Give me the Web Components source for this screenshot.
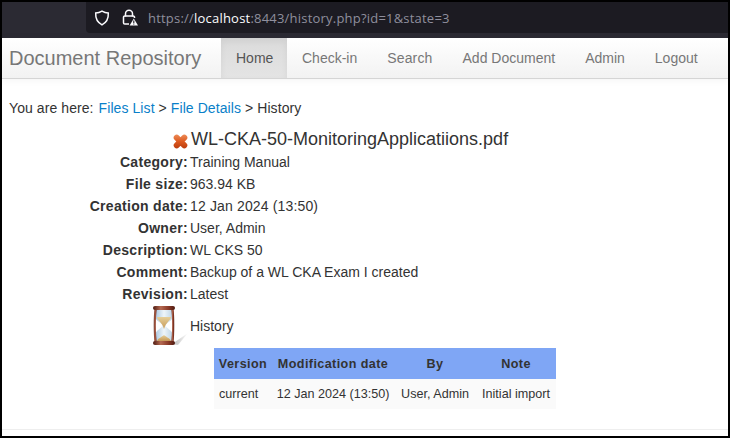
<!DOCTYPE html>
<html><head><meta charset="utf-8"><title>History</title>
<style>
html,body{margin:0;padding:0;background:#000;}
body{width:730px;height:438px;overflow:hidden;font-family:"Liberation Sans",Arial,sans-serif;}
</style></head><body>
<app-frame>
  <browser-bar slot="bar"></browser-bar>
  <nav-bar slot="nav"></nav-bar>
  <bread-crumb></bread-crumb>
  <file-details></file-details>
  <history-table></history-table>
</app-frame>
<script>
function def(name,html){
  customElements.define(name,class extends HTMLElement{
    constructor(){super();this.attachShadow({mode:'open'}).innerHTML=html;}
  });
}
def('app-frame',`<style>
:host{display:flex;flex-direction:column;width:726px;height:434px;padding:2px;background:#000;}
.page{flex:1;background:#fff;display:flex;flex-direction:column;min-height:0}
.main{flex:1;min-height:0;padding:0 7px;position:relative}
.foot{height:6px;border-top:1px solid #eee;background:#fff}
</style><slot name="bar"></slot><div class="page"><slot name="nav"></slot><div class="main"><slot></slot></div><div class="foot"></div></div>`);

def('browser-bar',`<style>
:host{display:flex;height:36px;background:#2b2a33;font:14px "Open Sans",sans-serif;}
.tab{width:84px}
.addr{flex:1;height:31px;background:#1c1b22;border-radius:0 0 0 4px;display:flex;align-items:center;padding-left:8px;box-sizing:border-box;color:#8f8f9d;font-size:13px;white-space:nowrap;letter-spacing:.21px}
.addr b{font-weight:400;color:#fbfbfe}
svg{display:block;flex:none}
.s{margin-right:12px}.l{margin-right:10px}
</style><div class="tab"></div><div class="addr">
<svg class="s" width="16" height="16" viewBox="0 0 16 16" fill="none" stroke="#fbfbfe" stroke-width="1.5"><path d="M8 1.2 C10 2.4 12 3 14.3 3 C14.600 8.500 12.500 12.500 8 14.800 C3.500 12.500 1.400 8.500 1.700 3 C4 3 6 2.400 8 1.200Z"/></svg>
<svg class="l" width="16" height="17" viewBox="0 0 16 17"><path d="M3.500 7.500V4.800a3.500 3.500 0 0 1 7 0V7.500" fill="none" stroke="#fbfbfe" stroke-width="1.500"/><path d="M7 15H2.800A1.300 1.300 0 0 1 1.500 13.700V8.300A1.300 1.300 0 0 1 2.800 7H11.200A1.300 1.300 0 0 1 12.500 8V9" fill="none" stroke="#fbfbfe" stroke-width="1.500"/><path d="M11.800 9.500L16 16.500H7.600Z" fill="#fbfbfe"/><path d="M11.800 11.500v2.400M11.800 14.600v.9" stroke="#1c1b22" stroke-width="1.100"/></svg>
<span>https://<b>localhost</b>:8443/history.php?id=1&amp;state=3</span></div>`);

def('nav-bar',`<style>
:host{display:flex;height:41px;box-sizing:border-box;border-bottom:1px solid #d5d5d5;background:linear-gradient(#fff,#f2f2f2);box-shadow:0 1px 8px rgba(0,0,0,.05);position:relative;font-size:14px;color:#777}
.brand{font-size:20px;line-height:40px;padding-left:7px;width:219px;box-sizing:border-box;white-space:nowrap}
a{color:#777;line-height:40px;padding:0 15px;text-decoration:none;display:block;white-space:nowrap}
a.on{color:#555;width:36px;background:linear-gradient(#dbdbdb,#e4e4e4);box-shadow:inset 0 3px 7px rgba(0,0,0,.06)}
a.wide{letter-spacing:.15px}
</style><div class="brand">Document Repository</div><a class="on">Home</a><a>Check-in</a><a class="wide">Search</a><a>Add Document</a><a>Admin</a><a>Logout</a>`);

def('bread-crumb',`<style>
:host{display:block;font-size:14px;line-height:20px;color:#333;padding-top:19px;height:20px;letter-spacing:.08px}
a{color:#0a7fc9;text-decoration:none}
a.first{margin-left:1px}
</style>You are here: <a class="first">Files List</a> &gt; <a>File Details</a> &gt; History`);

def('file-details',`<style>
:host{display:block;color:#333;font-size:14px;padding-top:10px}
.title{display:flex;align-items:flex-end;height:22px;margin-bottom:1px;padding-left:163px;font-size:18px;line-height:22px}
.title svg{margin:0 3px 1px 1px;flex:none}
.g{display:grid;grid-template-columns:179px 1fr;column-gap:2px;grid-auto-rows:22px;line-height:22px}
.k{font-weight:700;text-align:right;letter-spacing:.3px}
.d{letter-spacing:.15px}
.hist{display:flex;align-items:center;height:42px;padding-left:142px;margin-bottom:1px}
.hist svg{margin-right:1px;flex:none}
</style>
<div class="title"><svg width="15" height="15" viewBox="0 0 15 15"><defs><linearGradient id="x" gradientUnits="userSpaceOnUse" x1="0" y1="0" x2="0" y2="15"><stop offset="0" stop-color="#ee8f5c"/><stop offset=".5" stop-color="#dd5a20"/><stop offset="1" stop-color="#b93a0c"/></linearGradient></defs><path d="M3.700 3.700L11.300 11.300M11.300 3.700L3.700 11.300" fill="none" stroke="url(#x)" stroke-width="6" stroke-linecap="round"/></svg><span>WL-CKA-50-MonitoringApplicatiions.pdf</span></div>
<div class="g">
<div class="k">Category:</div><div>Training Manual</div>
<div class="k">File size:</div><div>963.94 KB</div>
<div class="k">Creation date:</div><div class="d">12 Jan 2024 (13:50)</div>
<div class="k">Owner:</div><div>User, Admin</div>
<div class="k">Description:</div><div>WL CKS 50</div>
<div class="k">Comment:</div><div>Backup of a WL CKA Exam I created</div>
<div class="k">Revision:</div><div>Latest</div>
</div>
<div class="hist"><svg width="38" height="42" viewBox="0 0 38 42">
<defs>
<linearGradient id="w" x1="0" x2="1"><stop offset="0" stop-color="#4d1a10"/><stop offset=".35" stop-color="#b56a52"/><stop offset=".7" stop-color="#8a3a28"/><stop offset="1" stop-color="#4d1a10"/></linearGradient>
<linearGradient id="gl" x1="0" x2="1"><stop offset="0" stop-color="#a9c6de"/><stop offset=".5" stop-color="#eef5fa"/><stop offset="1" stop-color="#bcd3e4"/></linearGradient>
<linearGradient id="sh" x1="0" x2="1"><stop offset="0" stop-color="#b5b5b5"/><stop offset="1" stop-color="#fff"/></linearGradient>
<linearGradient id="sa" x1="0" x2="0" y1="0" y2="1"><stop offset="0" stop-color="#e6cf9a"/><stop offset="1" stop-color="#c69a58"/></linearGradient>
</defs>
<path d="M21 39L37 28 27 40Z" fill="url(#sh)"/>
<path d="M4 5H22V11C22 16 15 17.500 14.500 20.500C15 23.500 22 25 22 31V37H4V31C4 25 11 23.500 11.500 20.500C11 17.500 4 16 4 11Z" fill="url(#gl)"/>
<path d="M6 12H20C20 15 15 17 13 24C11 17 6 15 6 12Z" fill="url(#sa)"/>
<path d="M6 36C7 33 11 32 13 30C15 32 19 33 20 36Z" fill="url(#sa)"/>
<path d="M3.500 3C2.500 10 2.500 30 3.500 38H6C4.500 30 4.500 10 6 3Z" fill="url(#w)"/>
<path d="M22.500 3C23.500 10 23.500 30 22.500 38H20C21.500 30 21.500 10 20 3Z" fill="url(#w)"/>
<rect x="2" y="1" width="22" height="4" rx="2" fill="url(#w)"/><rect x="2" y="36" width="22" height="4" rx="2" fill="url(#w)"/>
</svg><span>History</span></div>`);

def('history-table',`<style>
:host{display:block;margin-left:205px;width:342px}
table{border-collapse:collapse;width:342px;font-size:12.6px;color:#333;table-layout:fixed}
th{background:#7fa6f5;height:31px;padding:0;font-size:12.6px;font-weight:700;text-align:center;color:#333;letter-spacing:.4px}
td{background:#fafafa;height:30px;padding:0;text-align:center;white-space:nowrap}
td:first-child{text-align:left;padding-left:5px}
</style><table><colgroup><col style="width:58px"><col style="width:122px"><col style="width:82px"><col style="width:80px"></colgroup>
<tr><th>Version</th><th>Modification date</th><th>By</th><th>Note</th></tr>
<tr><td>current</td><td>12 Jan 2024 (13:50)</td><td>User, Admin</td><td>Initial import</td></tr></table>`);
</script>
</body></html>
